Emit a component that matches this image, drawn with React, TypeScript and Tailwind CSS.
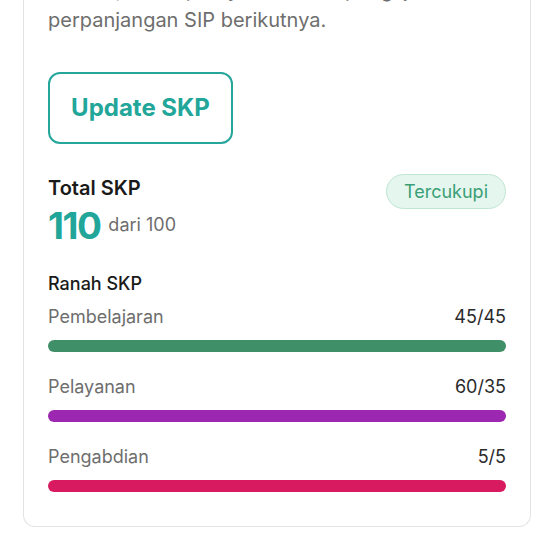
import React from "react";

const rows = [
  { label: "Pembelajaran", value: "45/45", color: "bg-[#3f8f69]" },
  { label: "Pelayanan", value: "60/35", color: "bg-[#9c27b0]" },
  { label: "Pengabdian", value: "5/5", color: "bg-[#d81b60]" },
];

export default function App() {
  return (
    <div className="w-[554px] h-[554px] bg-white overflow-hidden" style={{ fontFamily: "Inter, 'Noto Sans', sans-serif" }}>
      <div className="ml-[23px] w-[508px] -mt-[25px] border border-[#e3e3e3] border-t-0 rounded-b-[12px] px-6 pb-[34px]">
        <p className="text-[20px] leading-[30px] text-[#6e6e6e] tracking-[0px]">
          Isi data, untuk persyaratan dan pengajuan
          <br />
          perpanjangan SIP berikutnya.
        </p>
        <button className="mt-[37px] w-[185px] h-[72px] border-2 border-[#26a69a] rounded-[12px] text-[#22a699] text-[24px] font-bold flex items-center justify-center">
          Update SKP
        </button>
        <div className="mt-[30px] flex justify-between items-start">
          <div>
            <div className="text-[20px] leading-[28px] font-semibold text-[#1a1a1a]">Total SKP</div>
            <div className="flex items-center gap-[8px] mt-[4px]">
              <span className="text-[37px] leading-[40px] font-bold text-[#22a699] tracking-[-1.5px]">110</span>
              <span className="text-[18px] leading-[27px] text-[#6e6e6e] -mt-[3px]">dari 100</span>
            </div>
          </div>
          <div className="h-[35px] w-[120px] rounded-full bg-[#e5f6ee] border border-[#bfe6d3] text-[#3a9f76] text-[18px] flex items-center justify-center">
            Tercukupi
          </div>
        </div>
        <div className="mt-[24px] text-[18px] leading-[27px] font-medium text-[#1a1a1a]">Ranah SKP</div>
        <div className="mt-[6px] flex flex-col gap-[21px]">
          {rows.map((r) => (
            <div key={r.label} className="flex flex-col gap-[10px]">
              <div className="flex justify-between text-[18px] leading-[27px]">
                <span className="text-[#6e6e6e]">{r.label}</span>
                <span className="text-[#2a2a2a]">{r.value}</span>
              </div>
              <div className={`h-[12px] rounded-full ${r.color}`} />
            </div>
          ))}
        </div>
      </div>
    </div>
  );
}
